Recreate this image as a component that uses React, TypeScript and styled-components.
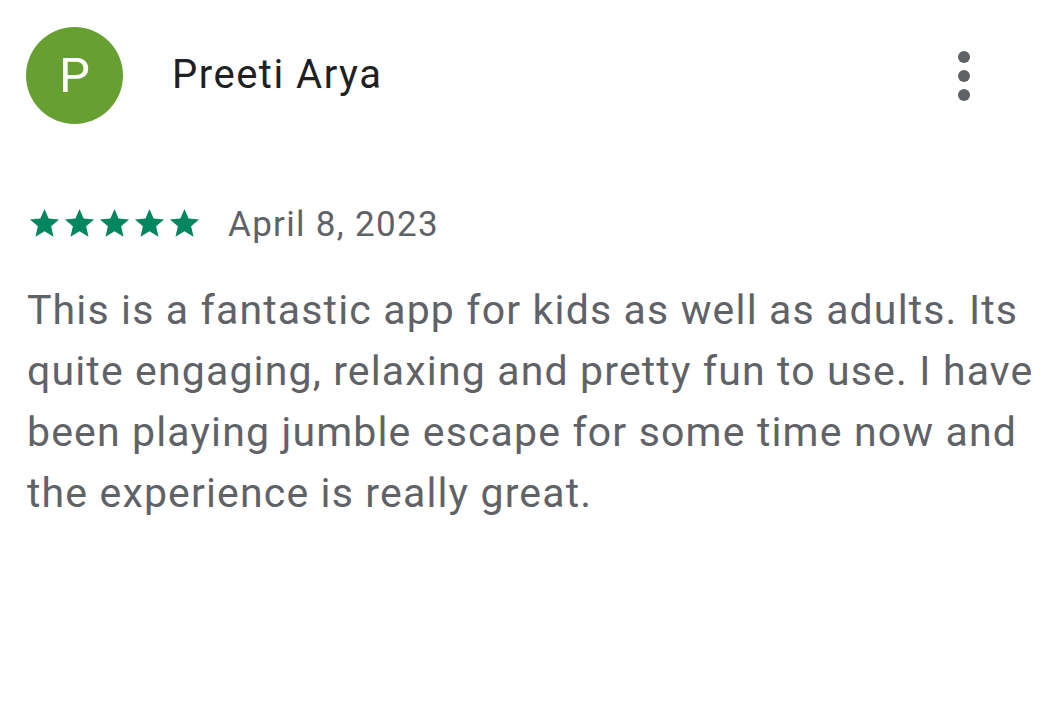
import React from "react";
import styled, { createGlobalStyle } from "styled-components";

const Global = createGlobalStyle`
  html, body { margin: 0; padding: 0; background: #ffffff; }
  body { font-family: Roboto, "Noto Sans", Arial, sans-serif; }
`;

const Card = styled.div`
  width: 1053px;
  height: 702px;
  box-sizing: border-box;
  padding: 27px 0 0 26px;
  display: flex;
  flex-direction: column;
  overflow: hidden;
`;

const Header = styled.div`
  display: flex;
  align-items: center;
  height: 97px;
`;

const Avatar = styled.div`
  width: 97px;
  height: 97px;
  border-radius: 50%;
  background: #65a030;
  color: #ffffff;
  display: flex;
  align-items: center;
  justify-content: center;
  font-size: 49px;
  font-weight: 400;
  flex-shrink: 0;
`;

const Name = styled.div`
  margin-left: 49px;
  font-size: 40px;
  letter-spacing: 1.5px;
  line-height: 46px;
  color: #202124;
  flex: 1;
  padding-bottom: 1px;
`;

const MoreButton = styled.div`
  width: 40px;
  height: 60px;
  margin-right: 69px;
  display: flex;
  flex-direction: column;
  align-items: center;
  justify-content: center;
  gap: 7px;
`;

const Dot = styled.span`
  width: 12px;
  height: 12px;
  border-radius: 50%;
  background: #5f6368;
`;

const RatingRow = styled.div`
  display: flex;
  align-items: center;
  height: 40px;
  margin-top: 81px;
  margin-left: 1px;
`;

const Stars = styled.div`
  display: flex;
  margin-top: -3px;
`;

const DateText = styled.span`
  margin-left: 26px;
  font-size: 35px;
  line-height: 40px;
  letter-spacing: 1.3px;
  color: #5f6368;
`;

const Body = styled.p`
  margin: 35px 0 0 1px;
  width: 1022px;
  font-size: 41px;
  line-height: 61px;
  letter-spacing: 1.15px;
  color: #5f6368;
`;

const Star = () => (
  <svg width="35" height="35" viewBox="0 0 24 24">
    <path
      fill="#01875f"
      d="M12 17.27L18.18 21l-1.64-7.03L22 9.24l-7.19-.61L12 2 9.19 8.63 2 9.24l5.46 4.73L5.82 21z"
    />
  </svg>
);

export default function App() {
  return (
    <>
      <Global />
      <Card>
        <Header>
          <Avatar>P</Avatar>
          <Name>Preeti Arya</Name>
          <MoreButton>
            <Dot />
            <Dot />
            <Dot />
          </MoreButton>
        </Header>
        <RatingRow>
          <Stars>
            {[0, 1, 2, 3, 4].map((i) => (
              <Star key={i} />
            ))}
          </Stars>
          <DateText>April 8, 2023</DateText>
        </RatingRow>
        <Body>
          This is a fantastic app for kids as well as adults. Its quite engaging, relaxing and pretty
          fun to use. I have been playing jumble escape for some time now and the experience is
          really great.
        </Body>
      </Card>
    </>
  );
}
